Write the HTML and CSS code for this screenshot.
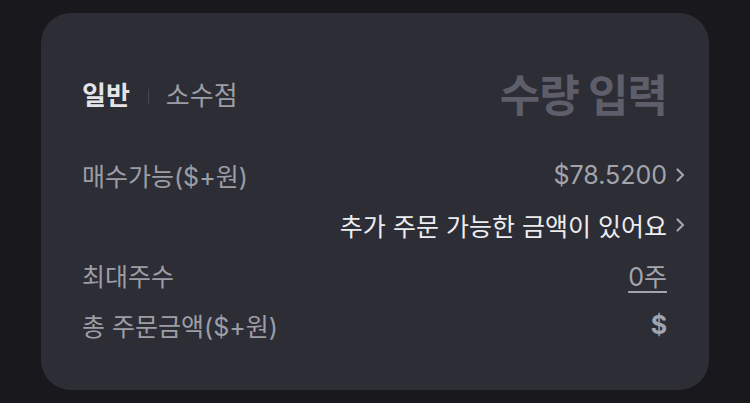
FILE: index.html
```html
<!DOCTYPE html>
<html lang="ko">
<head>
<meta charset="utf-8">
<link rel="stylesheet" href="styles.css">
</head>
<body>
<div class="card">
  <div class="header">
    <div class="tabs">
      <span class="tab active">일반</span>
      <span class="divider"></span>
      <span class="tab">소수점</span>
    </div>
    <div class="title">수량 입력</div>
  </div>
  <div class="rows">
    <div class="row">
      <span class="label">매수가능($+원)</span>
      <span class="value shifted">$78.5200<svg class="chev" viewBox="0 0 10 16"><path d="M2.5 2.5 L8 8 L2.5 13.5" /></svg></span>
    </div>
    <div class="row row-end">
      <span class="value bright shifted">추가 주문 가능한 금액이 있어요<svg class="chev" viewBox="0 0 10 16"><path d="M2.5 2.5 L8 8 L2.5 13.5" /></svg></span>
    </div>
    <div class="row">
      <span class="label">최대주수</span>
      <span class="value underline">0주</span>
    </div>
    <div class="row">
      <span class="label">총 주문금액($+원)</span>
      <span class="value strong">$</span>
    </div>
  </div>
</div>
</body>
</html>
```
FILE: styles.css
```css
html, body {
  margin: 0;
  padding: 0;
  background: #19191d;
  font-family: "Inter", "Noto Sans CJK KR", sans-serif;
}
body {
  width: 750px;
  height: 403px;
  overflow: hidden;
  padding-top: 13px;
  box-sizing: border-box;
}
.card {
  margin-left: 41px;
  width: 668px;
  height: 377px;
  box-sizing: border-box;
  background: #2c2d35;
  border-radius: 30px;
  padding: 55px 42px 0 41px;
}
.header {
  display: flex;
  justify-content: space-between;
  align-items: center;
  height: 56px;
}
.tabs {
  display: flex;
  align-items: center;
}
.tab {
  font-size: 26px;
  line-height: 32px;
  color: #9c9da5;
}
.tab.active {
  color: #e4e4e8;
  font-weight: 700;
}
.divider {
  width: 1px;
  height: 15px;
  background: #45464f;
  margin: 0 17px 0 18px;
}
.title {
  font-size: 44px;
  font-weight: 700;
  color: #5d5e6a;
  letter-spacing: -1px;
  line-height: 52px;
}
.rows {
  margin-top: 26px;
  display: flex;
  flex-direction: column;
}
.row {
  display: flex;
  justify-content: space-between;
  align-items: center;
  height: 50px;
}
.row-end {
  justify-content: flex-end;
}
.label {
  font-size: 25px;
  color: #9c9da5;
}
.value {
  font-size: 25px;
  color: #a3a4ac;
  display: flex;
  align-items: center;
}
.value.bright {
  color: #ececf0;
}
.value.shifted {
  margin-right: -18px;
}
.value.underline {
  text-decoration: underline;
  text-underline-offset: 5px;
  text-decoration-thickness: 2px;
}
.value.strong {
  font-weight: 700;
}
.chev {
  width: 10px;
  height: 16px;
  margin-left: 8px;
  fill: none;
  stroke: #a3a4ac;
  stroke-width: 2.2;
  stroke-linecap: round;
  stroke-linejoin: round;
}
```
